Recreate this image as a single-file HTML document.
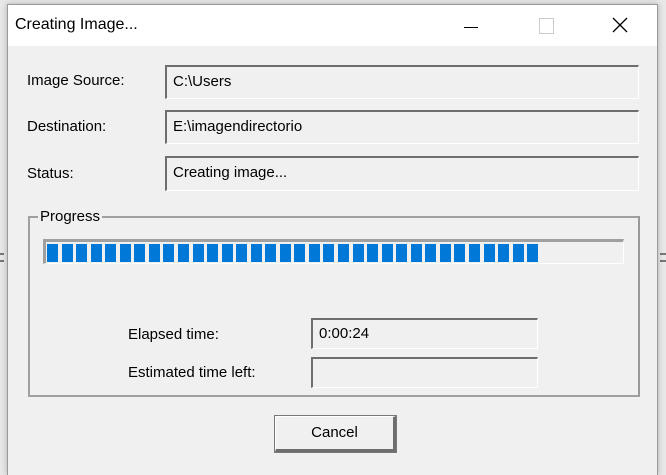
<!DOCTYPE html><html><head><style>
body{margin:0;width:666px;height:474px;background:#e8e8e8;position:relative;overflow:hidden;font-family:"Liberation Sans",sans-serif;font-size:15px;color:#000}
.win{position:absolute;left:7px;top:4px;width:649px;height:470px;background:#f0f0f0;border:1px solid #9a9a9a;border-bottom:none;box-shadow:0 0 6px rgba(0,0,0,.25)}
.title{position:absolute;left:0;top:0;width:649px;height:41px;background:#fff}
.t{position:absolute;white-space:nowrap}
.f{position:absolute;background:#f0f0f0;border-top:2px solid #6e6e6e;border-left:2px solid #6e6e6e;border-right:1px solid #fff;border-bottom:1px solid #fff;box-sizing:border-box;padding:6px 0 0 6px;white-space:nowrap}
.grp{position:absolute;left:20px;top:211px;width:612px;height:181px;border:2px solid #a0a0a0;border-right-color:#999;box-sizing:border-box}
.bar{position:absolute;left:35px;top:234px;width:581px;height:25px;border-top:3px solid #a0a0a0;border-left:3px solid #a0a0a0;border-right:1px solid #fff;border-bottom:1px solid #fff;box-sizing:border-box;background:#f0f0f0}
.blk{position:absolute;top:2px;width:11px;height:18px;background:#0078d7}
.btn{position:absolute;left:267px;top:411px;width:121px;height:36px;border:1px solid #fff;border-right:3px solid #6e6e6e;border-bottom:3px solid #6e6e6e;outline:1px solid #777;box-sizing:border-box;background:#f0f0f0;text-align:center;line-height:32px}
</style></head><body>
<div style="position:absolute;right:0;top:253px;width:6px;height:5px;border-top:2px solid #777;border-bottom:2px solid #777"></div>
<div style="position:absolute;left:0;top:253px;width:4px;height:5px;border-top:2px solid #777;border-bottom:2px solid #777"></div>
<div class="win">
<div class="title">
<span class="t" style="left:7px;top:11px;font-size:16px">Creating Image...</span>
<div style="position:absolute;left:456px;top:22px;width:14px;height:1px;background:#000"></div>
<div style="position:absolute;left:531px;top:13px;width:13px;height:14px;border:1px solid #ccc"></div>
<svg style="position:absolute;left:604px;top:12px" width="16" height="16"><path d="M1 1L15 15M15 1L1 15" stroke="#000" stroke-width="1.3"/></svg>
</div>
<span class="t" style="left:19px;top:67px">Image Source:</span>
<div class="f" style="left:157px;top:60px;width:474px;height:34px">C:\Users</div>
<span class="t" style="left:19px;top:113px">Destination:</span>
<div class="f" style="left:157px;top:105px;width:474px;height:34px">E:\imagendirectorio</div>
<span class="t" style="left:19px;top:160px">Status:</span>
<div class="f" style="left:157px;top:151px;width:474px;height:35px">Creating image...</div>
<div class="grp"></div>
<span class="t" style="left:30px;top:203px;background:#f0f0f0;padding:0 2px">Progress</span>
<div class="bar"></div>
<span class="t" style="left:120px;top:321px">Elapsed time:</span>
<div class="f" style="left:303px;top:313px;width:227px;height:31px;padding-top:5px">0:00:24</div>
<span class="t" style="left:120px;top:359px">Estimated time left:</span>
<div class="f" style="left:303px;top:352px;width:227px;height:31px"></div>
<div class="btn">Cancel</div>
</div>
<script>
var b=document.querySelector('.bar'),h='';for(var i=0;i<34;i++)h+='<div class="blk" style="left:'+(1+i*14.55)+'px"></div>';b.innerHTML=h;
</script>
</body></html>
